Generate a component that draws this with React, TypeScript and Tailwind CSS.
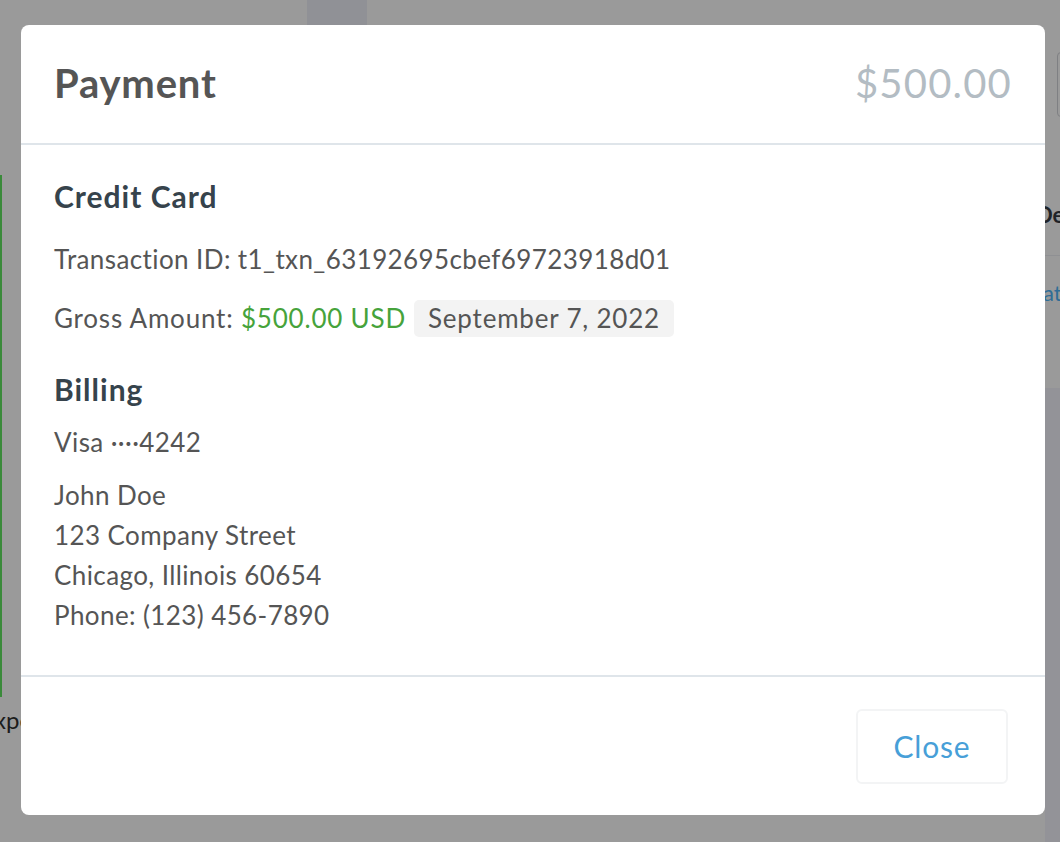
import { useState } from "react";

type Line = { label: string };

const ADDRESS: Line[] = [
    { label: "John Doe" },
    { label: "123 Company Street" },
    { label: "Chicago, Illinois 60654" },
    { label: "Phone: (123) 456-7890" },
];

function Backdrop() {
    return (
        <div className="flex h-full flex-col">
            <div className="flex h-[25px] shrink-0">
                <div className="ml-[307px] h-full w-[60px] bg-[#909196]"></div>
            </div>
            <div className="flex flex-1">
                <div className="w-[21px] shrink-0 overflow-hidden">
                    <div className="mt-[150px] h-[522px] border-l-2 border-[#3a8a3a]"></div>
                    <div className="mt-[8px] -ml-[6px] whitespace-nowrap text-[24px] leading-[30px] text-[#1c1c1c]">
                        xpe
                    </div>
                </div>
                <div className="flex-1"></div>
                <div className="-mt-[25px] w-[15px] shrink-0 overflow-hidden">
                    <div className="mt-[52px] ml-[12px] h-[65px] w-[20px] rounded-l-[4px] border border-[#7f8083]"></div>
                    <div className="mt-[73px] h-[66px] border-b border-[#8f9093] pt-[10px]">
                        <div className="-ml-[9px] whitespace-nowrap text-[22px] font-bold leading-[30px] text-[#1f2328]">
                            De
                        </div>
                    </div>
                    <div className="-ml-[2px] mt-[22px] whitespace-nowrap text-[22px] leading-[30px] text-[#2f6d96]">
                        at
                    </div>
                    <div className="mt-[80px] h-[600px] bg-[#939398]"></div>
                </div>
            </div>
            <div className="h-[42px] shrink-0 bg-[#939398]"></div>
        </div>
    );
}

export default function App() {
    const [open, setOpen] = useState(true);

    return (
        <div
            className="relative h-[842px] w-[1060px] overflow-hidden bg-[#9a9a9a]"
            style={{ fontFamily: "Lato, 'Open Sans', sans-serif" }}
        >
            <Backdrop />

            {open && (
                <div className="absolute left-[21px] top-[25px] flex h-[790px] w-[1024px] flex-col rounded-[8px] bg-white">
                    <div className="flex h-[120px] shrink-0 items-center justify-between border-b-2 border-[#dfe5ea] px-[33px] pb-[3px]">
                        <h1 className="text-[40px] font-bold leading-[46px] tracking-[0.8px] text-[#555555]">Payment</h1>
                        <span className="text-[40px] leading-[46px] tracking-[1.2px] text-[#b3bcc3]">$500.00</span>
                    </div>

                    <div className="flex-1 px-[33px] pt-[33px] text-[26px] leading-[40px] tracking-[0.4px] text-[#555555]">
                        <h2 className="text-[30px] font-bold leading-[36px] tracking-[1px] text-[#36434c]">Credit Card</h2>
                        <p className="mt-[25px]">Transaction ID: t1_txn_63192695cbef69723918d01</p>
                        <div className="mt-[18px] flex h-[42px] items-center tracking-[0.8px]">
                            <span>Gross Amount:&nbsp;</span>
                            <span className="text-[#46a33b]">$500.00 USD</span>
                            <span className="ml-[8px] flex h-[37px] items-center rounded-[5px] bg-[#f3f3f3] px-[14px]">
                                September 7, 2022
                            </span>
                        </div>

                        <h2 className="mt-[32px] text-[30px] font-bold leading-[36px] tracking-[1px] text-[#36434c]">Billing</h2>
                        <p className="mt-[15px]">Visa ····4242</p>
                        <div className="mt-[13px]">
                            {ADDRESS.map((line) => (
                                <p key={line.label}>{line.label}</p>
                            ))}
                        </div>
                    </div>

                    <div className="flex h-[140px] shrink-0 items-center justify-end border-t-2 border-[#dfe5ea] pr-[37px]">
                        <button
                            onClick={() => setOpen(false)}
                            className="h-[75px] w-[152px] rounded-[6px] border-2 border-[#f3f4f5] bg-white text-[30px] tracking-[0.8px] text-[#479fd8]"
                        >
                            Close
                        </button>
                    </div>
                </div>
            )}
        </div>
    );
}
